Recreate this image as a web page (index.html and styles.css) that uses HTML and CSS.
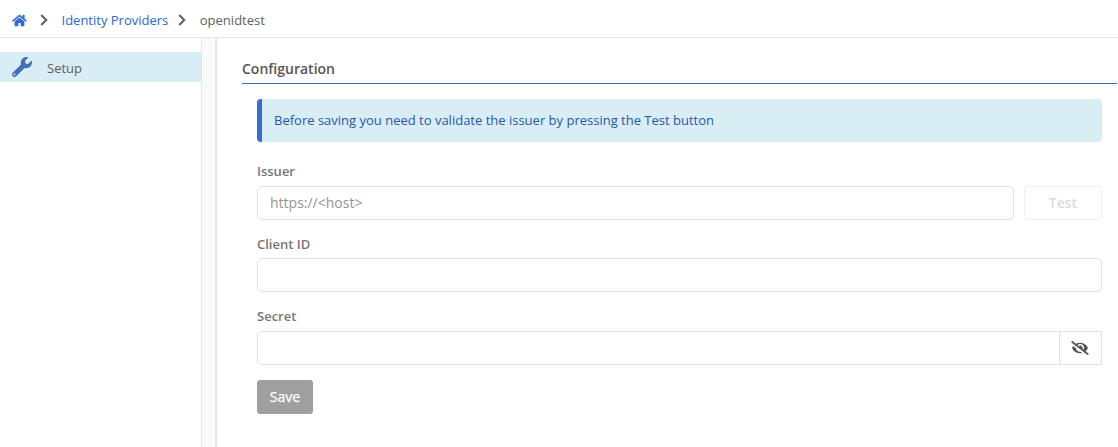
FILE: index.html
```html
<!DOCTYPE html>
<html lang="en">
<head>
<meta charset="utf-8">
<title>Identity Providers</title>
<link rel="stylesheet" href="styles.css">
</head>
<body>
<header class="breadcrumb">
  <svg class="icon-home" viewBox="0 0 576 512"><path d="M280.37 148.26L96 300.11V464a16 16 0 0 0 16 16l112.06-.29a16 16 0 0 0 15.92-16V368a16 16 0 0 1 16-16h64a16 16 0 0 1 16 16v95.64a16 16 0 0 0 16 16.05L464 480a16 16 0 0 0 16-16V300L295.67 148.26a12.19 12.19 0 0 0-15.3 0zM571.6 251.47L488 182.56V44.05a12 12 0 0 0-12-12h-56a12 12 0 0 0-12 12v72.61L318.47 43a48 48 0 0 0-61 0L4.34 251.47a12 12 0 0 0-1.6 16.9l25.5 31A12 12 0 0 0 45.15 301l235.22-193.74a12.19 12.19 0 0 1 15.3 0L530.9 301a12 12 0 0 0 16.9-1.6l25.5-31a12 12 0 0 0-1.7-16.93z"/></svg>
  <svg class="chevron" viewBox="0 0 8 12"><path d="M1.2 1l5 5-5 5"/></svg>
  <a class="crumb-link">Identity Providers</a>
  <svg class="chevron" viewBox="0 0 8 12"><path d="M1.2 1l5 5-5 5"/></svg>
  <span class="crumb-current">openidtest</span>
</header>
<div class="layout">
  <nav class="sidebar">
    <a class="nav-item">
      <svg class="icon-wrench" viewBox="0 0 512 512"><path d="M507.73 109.1c-2.24-9.03-13.54-12.09-20.12-5.51l-74.36 74.36-67.88-11.31-11.31-67.88 74.36-74.36c6.62-6.62 3.43-17.9-5.66-20.16-47.38-11.74-99.55.91-136.58 37.93-39.64 39.64-50.55 97.1-34.05 147.2L18.74 402.76c-24.99 24.99-24.99 65.51 0 90.5 24.99 24.99 65.51 24.99 90.5 0l213.21-213.21c50.12 16.71 107.47 5.68 147.37-34.22 37.07-37.07 49.7-89.32 37.91-136.73zM64 472c-13.25 0-24-10.75-24-24 0-13.26 10.75-24 24-24s24 10.74 24 24c0 13.25-10.75 24-24 24z"/></svg>
      <span>Setup</span>
    </a>
  </nav>
  <div class="gutter"></div>
  <main class="content">
    <h1 class="title">Configuration</h1>
    <form class="form">
      <div class="notice">Before saving you need to validate the issuer by pressing the Test button</div>
      <label class="label label-issuer" for="issuer">Issuer</label>
      <div class="row">
        <input class="input" id="issuer" placeholder="https://&lt;host&gt;">
        <button class="btn-test" type="button" disabled>Test</button>
      </div>
      <label class="label" for="client">Client ID</label>
      <input class="input" id="client">
      <label class="label label-secret" for="secret">Secret</label>
      <div class="group">
        <input class="input input-joined" id="secret" type="password">
        <button class="btn-eye" type="button" aria-label="Show secret">
          <svg class="icon-eye" viewBox="0 0 640 512"><path d="M320 400c-75.85 0-137.25-58.71-142.9-133.11L72.2 185.82c-13.79 17.3-26.48 35.59-36.72 55.59a32.35 32.35 0 0 0 0 29.19C89.71 376.41 197.07 448 320 448c26.91 0 52.87-4 77.89-10.46L346 397.39a144.13 144.13 0 0 1-26 2.61zm313.82 58.1l-110.55-85.44a331.25 331.25 0 0 0 81.25-102.07 32.35 32.35 0 0 0 0-29.19C550.29 135.59 442.93 64 320 64a308.15 308.15 0 0 0-147.32 37.7L45.46 3.37A16 16 0 0 0 23 6.18L3.37 31.45A16 16 0 0 0 6.18 53.9l588.36 454.73a16 16 0 0 0 22.46-2.81l19.64-25.27a16 16 0 0 0-2.82-22.45zm-183.72-142l-39.3-30.38A94.75 94.75 0 0 0 416 256a94.76 94.76 0 0 0-121.31-92.21A47.65 47.65 0 0 1 304 192a46.64 46.64 0 0 1-1.54 10l-73.61-56.89A142.31 142.31 0 0 1 320 112a143.92 143.92 0 0 1 144 144c0 21.63-5.29 41.79-13.9 60.11z"/></svg>
        </button>
      </div>
      <button class="btn-save" type="button" disabled>Save</button>
    </form>
  </main>
</div>
</body>
</html>
```

FILE: styles.css
```css
* { box-sizing: border-box; }
body {
  margin: 0;
  height: 447px;
  display: flex;
  flex-direction: column;
  overflow: hidden;
  background: #fff;
  color: #5f5f5f;
  font: 13px/20px "Open Sans", "Noto Sans", sans-serif;
}
.breadcrumb {
  height: 38px;
  flex: none;
  display: flex;
  align-items: center;
  padding: 3px 0 0 12px;
  border-bottom: 1px solid #e4e5e7;
}
.icon-home { width: 15px; height: 13px; fill: #2f6ad9; }
.chevron { width: 8px; height: 12px; margin: 0 13.5px 0 13px; fill: none; stroke: #666; stroke-width: 2.2; }
.crumb-link { color: #2a68d8; }
.crumb-link + .chevron { margin: 0 13.5px 0 10px; }
.layout { flex: 1; display: flex; }
.sidebar { width: 202px; flex: none; padding-top: 14px; border-right: 1px solid #e4e5e7; }
.nav-item {
  height: 30px;
  display: flex;
  align-items: center;
  gap: 15px;
  padding: 0 12px;
  background: #d9edf5;
}
.nav-item span { padding-top: 1px; }
.icon-wrench { width: 20px; height: 20px; fill: #446eb8; }
.gutter { width: 15px; flex: none; background: #fafafa; border-right: 2px solid #e6e7e9; }
.content { flex: 1; padding: 21px 1px 0 25px; }
.title {
  height: 25px;
  margin: 0;
  border-bottom: 1px solid #3b6cc7;
  font-size: 14px;
  line-height: 20px;
  font-weight: 600;
  color: #555;
}
.form { display: flex; flex-direction: column; padding: 15px 15px 0; }
.notice {
  height: 43px;
  padding: 11px 12px;
  border-left: 5px solid #356cd8;
  border-radius: 4px;
  background: #d9edf5;
  color: #2857b0;
}
.label { height: 20px; margin: 14px 0 4px; font-weight: 600; color: #767676; }
.label-issuer { margin: 19px 0 5px; }
.label-secret { margin-bottom: 5px; }
.row { display: flex; gap: 10px; }
.input {
  flex: 1;
  min-width: 0;
  min-height: 34px;
  padding: 0 12px;
  border: 1px solid #e2e2e2;
  border-radius: 5px;
  background: #fff;
  font: 14px/20px "Open Sans", "Noto Sans", sans-serif;
}
.input::placeholder { color: #949494; opacity: 1; }
.btn-test {
  width: 78px;
  height: 34px;
  border: 1px solid #f0f0f0;
  border-radius: 3px;
  background: #fff;
  color: #dcdcdc;
  font: 600 14px/20px "Open Sans", "Noto Sans", sans-serif;
}
.group { display: flex; }
.input-joined { border-radius: 5px 0 0 5px; }
.btn-eye {
  width: 42px;
  height: 34px;
  display: flex;
  align-items: center;
  justify-content: center;
  padding: 0 1px 0 0;
  border: 1px solid #e2e2e2;
  border-left: 0;
  background: #fff;
}
.icon-eye { width: 18px; height: 14px; fill: #555; }
.btn-save {
  width: 56px;
  height: 34px;
  margin-top: 15px;
  padding: 0;
  border: 0;
  border-radius: 3px;
  background: #9f9f9f;
  color: #fff;
  font: 14px/20px "Open Sans", "Noto Sans", sans-serif;
  -webkit-text-stroke: 0.25px #fff;
}
```
